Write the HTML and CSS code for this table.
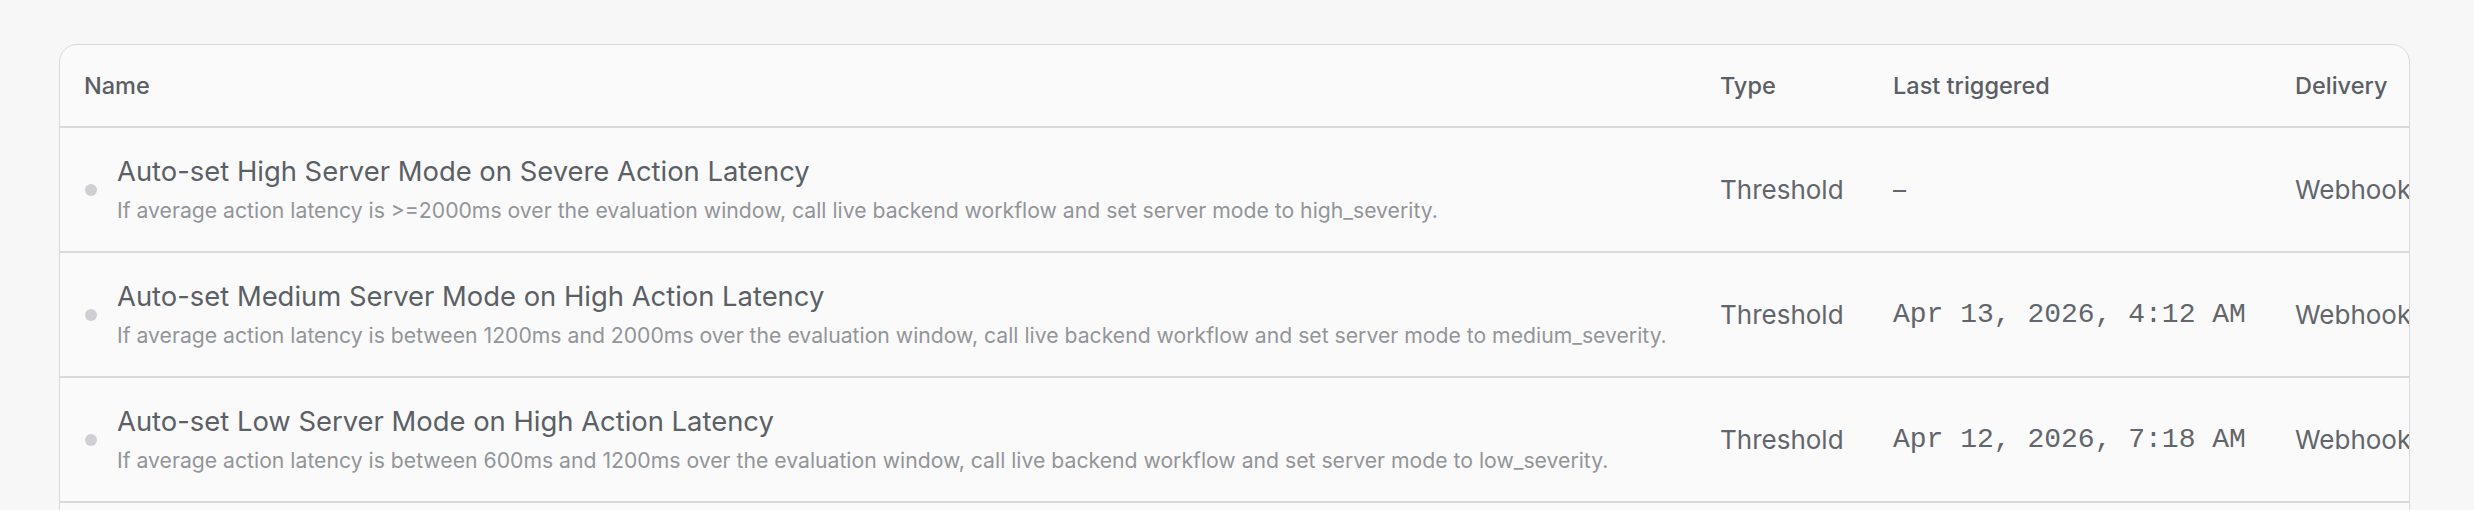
FILE: index.html
```html
<!DOCTYPE html>
<html lang="en">
<head>
<meta charset="utf-8">
<title>Alerts</title>
<link rel="stylesheet" href="styles.css">
</head>
<body>
<main class="page">
  <div class="card">
    <table class="alerts">
      <colgroup>
        <col class="c-name">
        <col class="c-type">
        <col class="c-last">
        <col class="c-delivery">
      </colgroup>
      <thead>
        <tr>
          <th>Name</th>
          <th>Type</th>
          <th>Last triggered</th>
          <th>Delivery</th>
        </tr>
      </thead>
      <tbody>
        <tr>
          <td>
            <div class="name-cell">
              <span class="dot"></span>
              <div class="name-text">
                <div class="title">Auto-set High Server Mode on Severe Action Latency</div>
                <div class="desc">If average action latency is &gt;=2000ms over the evaluation window, call live backend workflow and set server mode to high_severity.</div>
              </div>
            </div>
          </td>
          <td class="cell">Threshold</td>
          <td class="cell">–</td>
          <td class="cell">Webhook</td>
        </tr>
        <tr>
          <td>
            <div class="name-cell">
              <span class="dot"></span>
              <div class="name-text">
                <div class="title">Auto-set Medium Server Mode on High Action Latency</div>
                <div class="desc">If average action latency is between 1200ms and 2000ms over the evaluation window, call live backend workflow and set server mode to medium_severity.</div>
              </div>
            </div>
          </td>
          <td class="cell">Threshold</td>
          <td class="cell mono">Apr 13, 2026, 4:12 AM</td>
          <td class="cell">Webhook</td>
        </tr>
        <tr>
          <td>
            <div class="name-cell">
              <span class="dot"></span>
              <div class="name-text">
                <div class="title">Auto-set Low Server Mode on High Action Latency</div>
                <div class="desc">If average action latency is between 600ms and 1200ms over the evaluation window, call live backend workflow and set server mode to low_severity.</div>
              </div>
            </div>
          </td>
          <td class="cell">Threshold</td>
          <td class="cell mono">Apr 12, 2026, 7:18 AM</td>
          <td class="cell">Webhook</td>
        </tr>
        <tr class="row-next">
          <td></td>
          <td></td>
          <td></td>
          <td></td>
        </tr>
      </tbody>
    </table>
  </div>
</main>
</body>
</html>
```

FILE: styles.css
```css
html, body {
  margin: 0;
  padding: 0;
  background: #f7f7f7;
}

body {
  font-family: Inter, "Noto Sans", sans-serif;
  color: #5d6168;
}

.page {
  padding: 44px 64px 0 59px;
}

.card {
  background: #fafafa;
  border: 1px solid #d9d9dd;
  border-radius: 18px;
  overflow: hidden;
}

.alerts {
  border-collapse: collapse;
  table-layout: fixed;
  width: 2420px;
}

.c-name { width: 1636px; }
.c-type { width: 173px; }
.c-last { width: 402px; }
.c-delivery { width: 209px; }

.alerts th {
  height: 81px;
  padding: 0 24px;
  text-align: left;
  font-weight: 500;
  font-size: 23.5px;
  color: #5a5e65;
  border-bottom: 2px solid #dadade;
  white-space: nowrap;
}

.alerts td {
  height: 123px;
  padding: 0 24px;
  border-bottom: 2px solid #dadade;
  vertical-align: middle;
  white-space: nowrap;
}

.name-cell {
  display: flex;
  align-items: center;
  gap: 20px;
}

.dot {
  flex: none;
  width: 12px;
  height: 12px;
  border-radius: 50%;
  background: #cfcfd3;
  margin-left: 1px;
}

.name-text {
  display: flex;
  flex-direction: column;
  gap: 5px;
}

.title {
  font-size: 27.4px;
  line-height: 36px;
  font-weight: 400;
  color: #5b5f66;
}

.desc {
  font-size: 21.2px;
  line-height: 32px;
  color: #929599;
}

.cell {
  font-size: 26px;
  color: #62666c;
}

.mono {
  font-family: "Liberation Mono", "DejaVu Sans Mono", monospace;
  font-size: 28px;
}
```
